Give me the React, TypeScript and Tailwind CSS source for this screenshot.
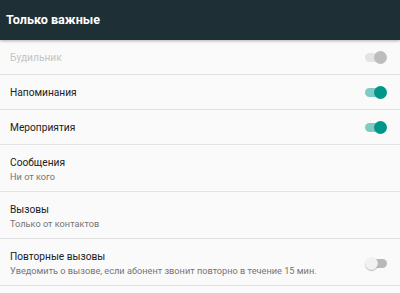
import React from 'react';

type Row = {
  title: string;
  sub?: string;
  toggle?: 'on' | 'off' | 'disabled';
  disabled?: boolean;
};

const rows: Row[] = [
  { title: 'Будильник', toggle: 'disabled', disabled: true },
  { title: 'Напоминания', toggle: 'on' },
  { title: 'Мероприятия', toggle: 'on' },
  { title: 'Сообщения', sub: 'Ни от кого' },
  { title: 'Вызовы', sub: 'Только от контактов' },
  {
    title: 'Повторные вызовы',
    sub: 'Уведомить о вызове, если абонент звонит повторно в течение 15 мин.',
    toggle: 'off',
  },
];

const Toggle: React.FC<{ state: 'on' | 'off' | 'disabled' }> = ({ state }) => {
  if (state === 'off')
    return (
      <div className="relative w-[22px] h-[13px] flex items-center">
        <div className="absolute left-[4px] right-0 h-[9px] rounded-full bg-[#b9b9b9]" />
        <div className="absolute left-0 w-[13px] h-[13px] rounded-full bg-[#f1f1f1] shadow-[0_1px_1px_rgba(0,0,0,0.25)]" />
      </div>
    );
  const on = state === 'on';
  return (
    <div className="relative w-[22px] h-[13px] flex items-center">
      <div
        className={
          'absolute left-0 right-[4px] h-[9px] rounded-full ' +
          (on ? 'bg-[#80cbc4]' : 'bg-[#e4e4e4]')
        }
      />
      <div
        className={
          'absolute right-0 w-[13px] h-[13px] rounded-full ' +
          (on ? 'bg-[#009688]' : 'bg-[#bdbdbd]')
        }
      />
    </div>
  );
};

export default function App() {
  return (
    <div className="w-[400px] h-[293px] overflow-hidden bg-[#fafafa] font-['Roboto',sans-serif]">
      <div className="h-[40px] bg-[#1e2f36] flex items-center px-[6px] shadow-[0_1px_3px_rgba(0,0,0,0.3)] relative">
        <h1 className="text-white text-[12.6px] font-bold">Только важные</h1>
      </div>
      <div>
        {rows.map((r) => (
          <div
            key={r.title}
            className={
              'flex items-center justify-between pl-[10px] pr-[13px] border-b border-[#e3e3e3] ' +
              (r.sub ? 'h-[47px] pt-[3px]' : 'h-[35px] pt-[1px]')
            }
          >
            <div className="flex flex-col">
              <span
                className={
                  'text-[10.2px] leading-[14px] ' + (r.disabled ? 'text-[#c4c4c4]' : 'text-[#212121]')
                }
              >
                {r.title}
              </span>
              {r.sub && (
                <span className="text-[9.2px] leading-[14px] text-[#757575]">{r.sub}</span>
              )}
            </div>
            {r.toggle && <Toggle state={r.toggle} />}
          </div>
        ))}
      </div>
    </div>
  );
}
